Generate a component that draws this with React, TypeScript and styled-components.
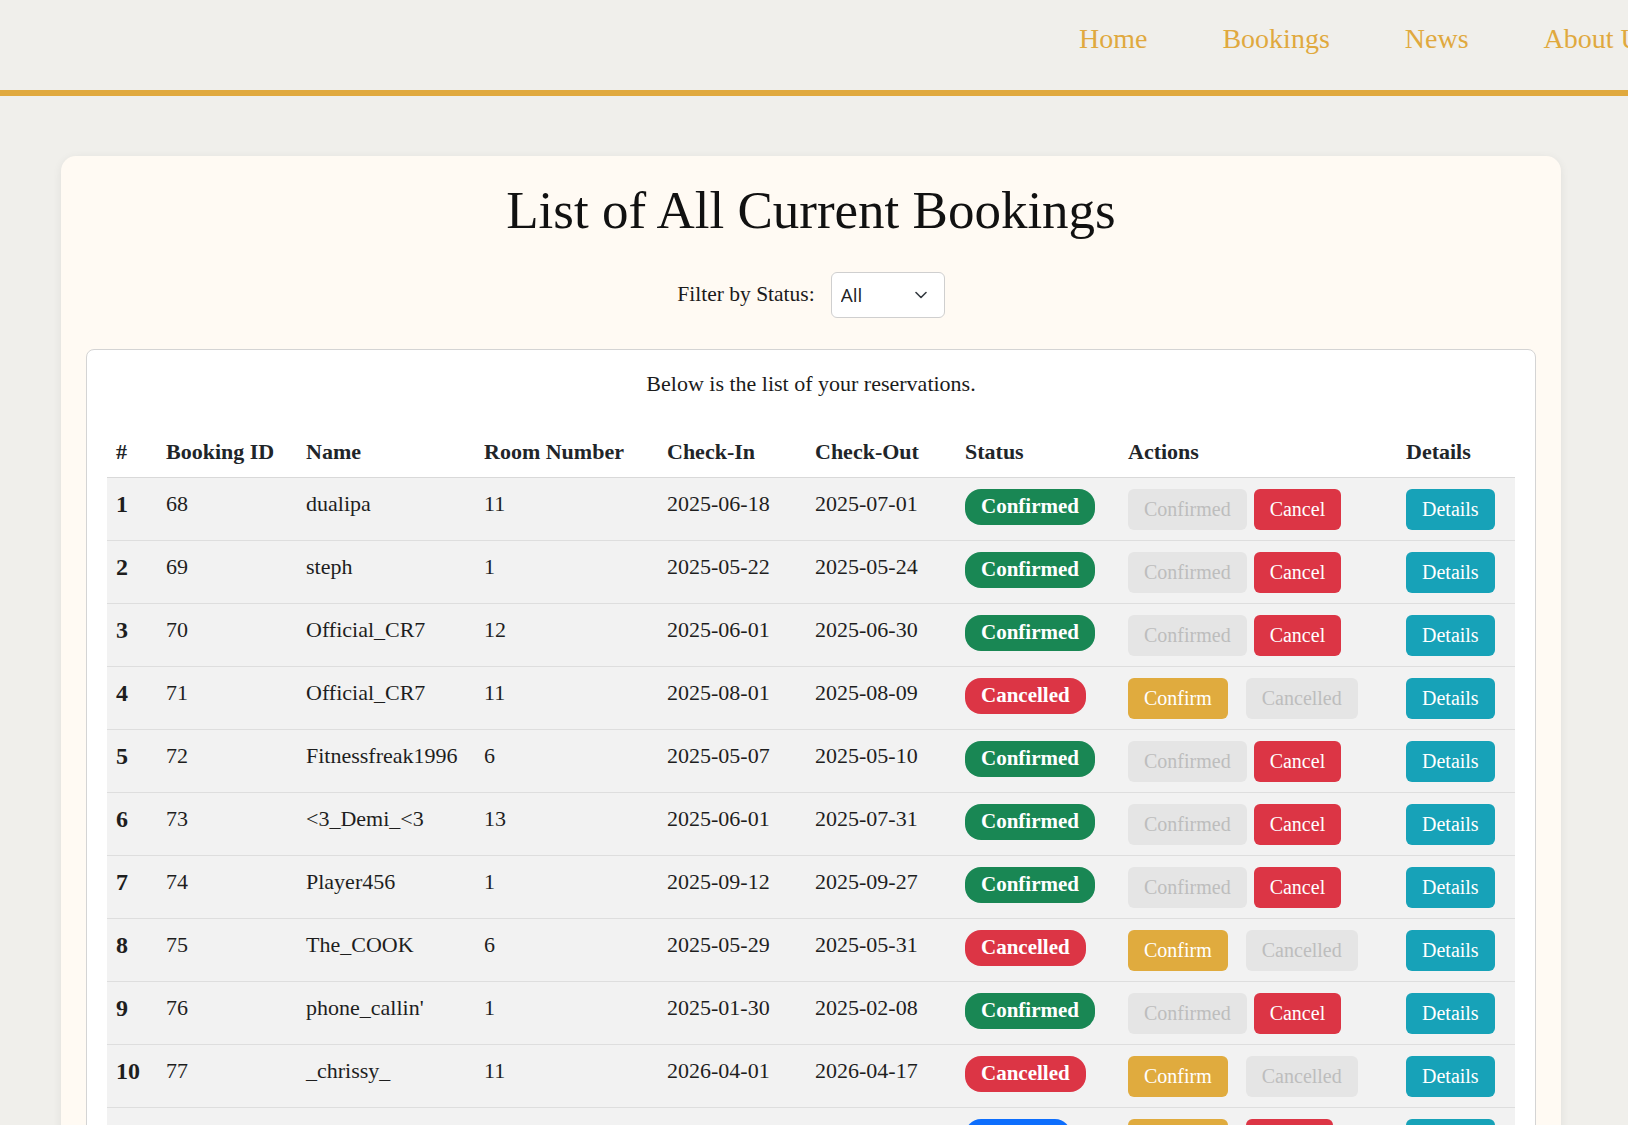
import React from "react";
import styled, { createGlobalStyle, css } from "styled-components";

const GlobalStyle = createGlobalStyle`
  html, body {
    margin: 0;
    padding: 0;
    background: #f0efeb;
    font-family: "Liberation Serif", "Times New Roman", serif;
    color: #212529;
    overflow-x: hidden;
  }
  * { box-sizing: border-box; }
`;

type Status = "Confirmed" | "Cancelled" | "Pending";

interface Booking {
  id: number;
  name: string;
  room: number;
  checkIn: string;
  checkOut: string;
  status: Status;
}

const bookings: Booking[] = [
  { id: 68, name: "dualipa", room: 11, checkIn: "2025-06-18", checkOut: "2025-07-01", status: "Confirmed" },
  { id: 69, name: "steph", room: 1, checkIn: "2025-05-22", checkOut: "2025-05-24", status: "Confirmed" },
  { id: 70, name: "Official_CR7", room: 12, checkIn: "2025-06-01", checkOut: "2025-06-30", status: "Confirmed" },
  { id: 71, name: "Official_CR7", room: 11, checkIn: "2025-08-01", checkOut: "2025-08-09", status: "Cancelled" },
  { id: 72, name: "Fitnessfreak1996", room: 6, checkIn: "2025-05-07", checkOut: "2025-05-10", status: "Confirmed" },
  { id: 73, name: "<3_Demi_<3", room: 13, checkIn: "2025-06-01", checkOut: "2025-07-31", status: "Confirmed" },
  { id: 74, name: "Player456", room: 1, checkIn: "2025-09-12", checkOut: "2025-09-27", status: "Confirmed" },
  { id: 75, name: "The_COOK", room: 6, checkIn: "2025-05-29", checkOut: "2025-05-31", status: "Cancelled" },
  { id: 76, name: "phone_callin'", room: 1, checkIn: "2025-01-30", checkOut: "2025-02-08", status: "Confirmed" },
  { id: 77, name: "_chrissy_", room: 11, checkIn: "2026-04-01", checkOut: "2026-04-17", status: "Cancelled" },
  { id: 78, name: "marco_polo", room: 4, checkIn: "2026-05-02", checkOut: "2026-05-09", status: "Pending" },
];

const colWidths = [50, 140, 178, 183, 148, 150, 163, 278, 118];

const Header = styled.header`
  display: flex;
  height: 96px;
  padding-top: 22px;
  border-bottom: 6px solid #e0a93e;
  background: #f0efeb;
  white-space: nowrap;
`;

const BrandSlot = styled.div`
  flex: 0 0 1079px;
`;

const NavList = styled.nav`
  display: flex;
  gap: 75px;
  align-items: flex-start;
`;

const NavLink = styled.a`
  font-size: 28px;
  line-height: 1.2;
  color: #e0a93e;
  text-decoration: none;
  cursor: pointer;
`;

const Main = styled.main`
  padding: 60px 67px 60px 61px;
`;

const Card = styled.section`
  width: 1500px;
  background: #fffaf3;
  border-radius: 15px;
  box-shadow: 0 2px 10px rgba(0, 0, 0, 0.07);
  padding: 23px 25px 25px;
`;

const Title = styled.h1`
  margin: 0;
  text-align: center;
  font-size: 53px;
  font-weight: 400;
  line-height: 1.2;
  color: #111;
`;

const FilterRow = styled.div`
  display: flex;
  justify-content: center;
  align-items: center;
  gap: 16px;
  margin: 29px 0 31px;
`;

const FilterLabel = styled.label`
  font-size: 21.5px;
  color: #1b1b1b;
`;

const SelectWrap = styled.div`
  position: relative;
  width: 114px;
  height: 46px;
`;

const Select = styled.select`
  appearance: none;
  width: 100%;
  height: 100%;
  padding: 0 30px 0 9px;
  border: 1px solid #cfcfcf;
  border-radius: 6px;
  background: #fff;
  font-family: "Open Sans", "Noto Sans", sans-serif;
  font-size: 19px;
  color: #222;
`;

const Chevron = styled.svg`
  position: absolute;
  right: 18px;
  top: 19px;
  pointer-events: none;
`;

const TableBox = styled.div`
  background: #fff;
  border: 1px solid #d4d4d4;
  border-radius: 8px;
  padding: 21px 20px 0;
`;

const Caption = styled.p`
  margin: 0 0 30px;
  text-align: center;
  font-size: 22px;
  line-height: 26px;
  color: #1b1b1b;
`;

const Table = styled.table`
  width: 1408px;
  border-collapse: collapse;
  table-layout: fixed;
  font-size: 22px;
  line-height: 26px;
`;

const HeadCell = styled.th`
  text-align: left;
  font-weight: 700;
  padding: 12px 8px 12px 9px;
  color: #212529;
  white-space: nowrap;
  border-bottom: 1px solid #d9d9d9;
`;

const BodyRow = styled.tr`
  background: #f2f2f2;
  border-bottom: 1px solid #dedede;
`;

const Cell = styled.td<{ $bold?: boolean; $control?: boolean }>`
  vertical-align: top;
  padding: ${(p) => (p.$control ? "11px 8px 10px 9px" : "13px 8px 8px 9px")};
  height: 62px;
  white-space: nowrap;
  color: #1e1e1e;
  ${(p) =>
    p.$bold &&
    css`
      font-weight: 700;
      font-size: 24px;
    `}
`;

const badgeColors: Record<Status, string> = {
  Confirmed: "#198754",
  Cancelled: "#dc3545",
  Pending: "#0d6efd",
};

const Badge = styled.span<{ $status: Status }>`
  display: inline-flex;
  align-items: center;
  height: 36px;
  padding: 0 16px 2px;
  border-radius: 16px;
  background: ${(p) => badgeColors[p.$status]};
  color: #fff;
  font-size: 21px;
  font-weight: 700;
`;

type Variant = "gold" | "red" | "teal" | "muted";

const variantStyles: Record<Variant, ReturnType<typeof css>> = {
  gold: css`
    background: #e0ab3e;
    color: #fff;
  `,
  red: css`
    background: #dc3545;
    color: #fff;
  `,
  teal: css`
    background: #17a2b8;
    color: #fff;
  `,
  muted: css`
    background: #e5e5e5;
    color: #bdbdbd;
    cursor: default;
  `,
};

const Button = styled.button<{ $variant: Variant; $spaceAfter?: number }>`
  height: 41px;
  padding: 0 16px;
  border: none;
  border-radius: 6px;
  font-family: inherit;
  font-size: 20px;
  cursor: pointer;
  margin-right: ${(p) => p.$spaceAfter ?? 0}px;
  ${(p) => variantStyles[p.$variant]}
`;

const Actions = styled.div`
  display: flex;
  align-items: flex-start;
`;

const headers = [
  "#",
  "Booking ID",
  "Name",
  "Room Number",
  "Check-In",
  "Check-Out",
  "Status",
  "Actions",
  "Details",
];

function ActionButtons({ status }: { status: Status }) {
  if (status === "Confirmed") {
    return (
      <Actions>
        <Button $variant="muted" $spaceAfter={7} disabled>
          Confirmed
        </Button>
        <Button $variant="red">Cancel</Button>
      </Actions>
    );
  }
  if (status === "Cancelled") {
    return (
      <Actions>
        <Button $variant="gold" $spaceAfter={18}>
          Confirm
        </Button>
        <Button $variant="muted" disabled>
          Cancelled
        </Button>
      </Actions>
    );
  }
  return (
    <Actions>
      <Button $variant="gold" $spaceAfter={18}>
        Confirm
      </Button>
      <Button $variant="red">Cancel</Button>
    </Actions>
  );
}

export default function App() {
  return (
    <>
      <GlobalStyle />
      <Header>
        <BrandSlot />
        <NavList>
          <NavLink>Home</NavLink>
          <NavLink>Bookings</NavLink>
          <NavLink>News</NavLink>
          <NavLink>About Us</NavLink>
        </NavList>
      </Header>
      <Main>
        <Card>
          <Title>List of All Current Bookings</Title>
          <FilterRow>
            <FilterLabel htmlFor="status-filter">Filter by Status:</FilterLabel>
            <SelectWrap>
              <Select id="status-filter" defaultValue="All">
                <option>All</option>
                <option>Confirmed</option>
                <option>Cancelled</option>
                <option>Pending</option>
              </Select>
              <Chevron width="12" height="8" viewBox="0 0 12 8">
                <path d="M1 1.5 L6 6.5 L11 1.5" fill="none" stroke="#343a40" strokeWidth="1.6" strokeLinecap="round" strokeLinejoin="round" />
              </Chevron>
            </SelectWrap>
          </FilterRow>
          <TableBox>
            <Caption>Below is the list of your reservations.</Caption>
            <Table>
              <colgroup>
                {colWidths.map((w, i) => (
                  <col key={i} style={{ width: w }} />
                ))}
              </colgroup>
              <thead>
                <tr>
                  {headers.map((h) => (
                    <HeadCell key={h}>{h}</HeadCell>
                  ))}
                </tr>
              </thead>
              <tbody>
                {bookings.map((b, i) => (
                  <BodyRow key={b.id}>
                    <Cell $bold>{i + 1}</Cell>
                    <Cell>{b.id}</Cell>
                    <Cell>{b.name}</Cell>
                    <Cell>{b.room}</Cell>
                    <Cell>{b.checkIn}</Cell>
                    <Cell>{b.checkOut}</Cell>
                    <Cell $control>
                      <Badge $status={b.status}>{b.status}</Badge>
                    </Cell>
                    <Cell $control>
                      <ActionButtons status={b.status} />
                    </Cell>
                    <Cell $control>
                      <Button $variant="teal">Details</Button>
                    </Cell>
                  </BodyRow>
                ))}
              </tbody>
            </Table>
          </TableBox>
        </Card>
      </Main>
    </>
  );
}
